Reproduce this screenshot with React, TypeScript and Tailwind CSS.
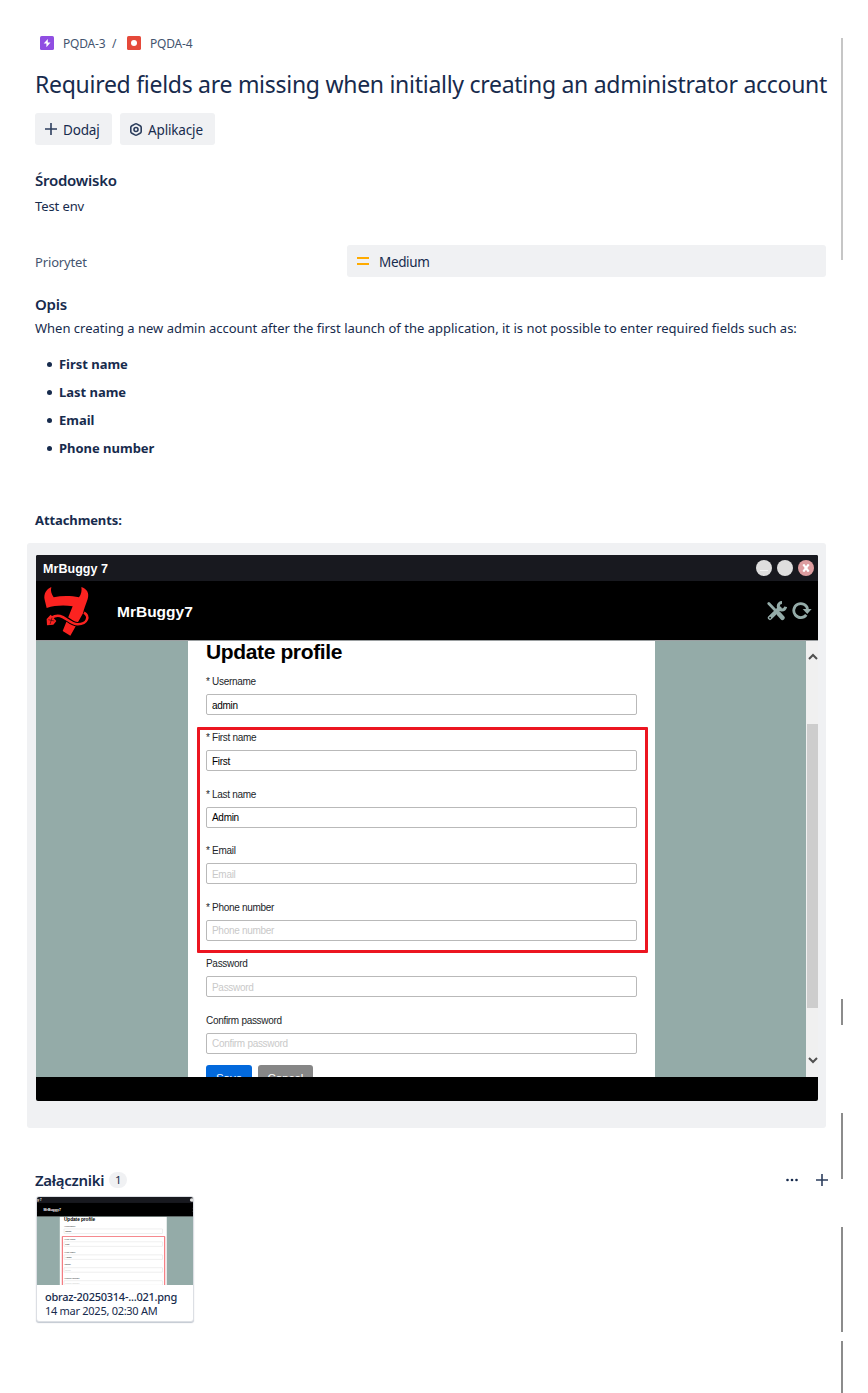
import React from "react";

const SEGMENTS = [
  { gap: "mt-[38px]", size: "h-[222px]", tone: "bg-[#c6c6c6]" },
  { gap: "mt-[739px]", size: "h-[26px]", tone: "bg-[#8c8c8c]" },
  { gap: "mt-[88px]", size: "h-[66px]", tone: "bg-[#8c8c8c]" },
  { gap: "mt-[48px]", size: "h-[105px]", tone: "bg-[#8c8c8c]" },
  { gap: "mt-[9px]", size: "h-[52px]", tone: "bg-[#8c8c8c]" },
];

function ScrollRail() {
  return (
    <div className="flex w-[2px] shrink-0 flex-col">
      {SEGMENTS.map((s, i) => (
        <div key={i} className={`${s.gap} ${s.size} ${s.tone} w-[2px] shrink-0`} />
      ))}
    </div>
  );
}

function EpicIcon() {
  return (
    <svg width="14" height="14" viewBox="0 0 14 14">
      <rect width="14" height="14" rx="1.6" fill="#904ee2" />
      <path d="M7.8 2.9 3.7 7.5h2.7v3.7l4.1-4.6H7.8z" fill="#fff" />
    </svg>
  );
}

function BugIcon() {
  return (
    <svg width="14" height="14" viewBox="0 0 14 14">
      <rect width="14" height="14" rx="1.6" fill="#e5493a" />
      <circle cx="7" cy="7" r="3" fill="#fff" />
    </svg>
  );
}

function PlusIcon() {
  return (
    <svg width="12" height="12" viewBox="0 0 12 12" fill="none" stroke="#2c3e5d" strokeWidth="1.6">
      <path d="M6 0v12M0 6h12" />
    </svg>
  );
}

function AppsIcon() {
  return (
    <svg width="12" height="13" viewBox="0 0 12 13" fill="none" stroke="#2c3e5d" strokeWidth="1.6">
      <path d="M4.9 1.1Q6 .5 7.1 1.1l3 1.7q1.1.6 1.1 1.8v3.8q0 1.2-1.1 1.8l-3 1.7q-1.1.6-2.2 0l-3-1.7Q.8 9.6.8 8.4V4.6q0-1.2 1.1-1.8z" />
      <circle cx="6" cy="6.5" r="2" />
    </svg>
  );
}

function DevilLogo() {
  return (
    <svg width="48" height="52" viewBox="70 120 144 156">
      <path
        d="M95 126C80 132 71 148 75 164L81 189C106 181 134 180 159 184L129 258 152 272 190 205C193 190 199 178 204 162 210 144 201 131 185 126 187 136 185 148 178 157 154 152 126 152 102 157 95 147 92 137 95 126z"
        fill="#fb2320"
      />
      <path d="M112 211C135 208 150 238 174 238 203 237 209 215 192 207" fill="none" stroke="#000" strokeWidth="14" />
      <path d="M96 218C128 197 144 237 174 238 205 237 210 213 193 203" fill="none" stroke="#fb2320" strokeWidth="7.5" />
      <path d="M93 209 110 228 101 239 82 241 81 222z" fill="#fb2320" />
      <path d="M86 224 104 228M91 238 97 218" stroke="#000" strokeWidth="1.5" />
    </svg>
  );
}

function ToolsIcon() {
  return (
    <svg width="20" height="20" viewBox="0 0 20 20" fill="none" stroke="#94aba8">
      <path d="M1.8 2.6 9 10" strokeWidth="2.8" strokeLinecap="round" />
      <path d="M12 13 15.4 16.8" strokeWidth="4.6" strokeLinecap="round" />
      <path d="M3 16.8 12.5 7.5" strokeWidth="4.4" strokeLinecap="round" />
      <path d="M15 1.6A3.7 3.7 0 1 0 18.6 5.8" strokeWidth="3" />
      <circle cx="3.1" cy="16.7" r=".9" fill="#000" stroke="none" />
    </svg>
  );
}

function ReloadIcon() {
  return (
    <svg width="20" height="18" viewBox="0 0 20 18">
      <path d="M14.3 13.9A7 7 0 1 1 15.6 8" fill="none" stroke="#94aba8" strokeWidth="2.8" />
      <path d="M10.7 8h8.9l-4.3 5z" fill="#94aba8" />
    </svg>
  );
}

function Chevron({ down = false }: { down?: boolean }) {
  return (
    <svg width="10" height="7" viewBox="0 0 10 7" fill="none" stroke="#505050" strokeWidth="2">
      <path d={down ? "M1 1l4 4 4-4" : "M1 6l4-4 4 4"} />
    </svg>
  );
}

const FIELDS = [
  { label: "* Username", value: "admin", filled: true },
  { label: "* First name", value: "First", filled: true },
  { label: "* Last name", value: "Admin", filled: true },
  { label: "* Email", value: "Email", filled: false },
  { label: "* Phone number", value: "Phone number", filled: false },
  { label: "Password", value: "Password", filled: false },
  { label: "Confirm password", value: "Confirm password", filled: false },
];

function BuggyWindow() {
  return (
    <div className="flex h-[546px] w-[782px] flex-col overflow-hidden rounded-[2px] bg-black font-['Liberation_Sans',Arial,sans-serif]">
      <div className="flex h-[26px] shrink-0 items-center bg-[#18191f] pl-[7px] pr-[4px]">
        <span className="mt-[2px] text-[12.5px] font-bold leading-none tracking-[0.05px] text-white">MrBuggy 7</span>
        <div className="ml-auto flex gap-[5px]">
          <span className="flex h-[16px] w-[16px] items-center justify-center rounded-full bg-[#dedede]">
            <span className="mt-[5px] h-px w-[8px] bg-[#f4f4f4]" />
          </span>
          <span className="h-[16px] w-[16px] rounded-full bg-[#dedede]" />
          <span className="flex h-[16px] w-[16px] items-center justify-center rounded-full bg-[#dd9da0]">
            <svg width="8" height="8" viewBox="0 0 8 8" stroke="#fff" strokeWidth="2.2">
              <path d="M1.3 .4l5.4 7.2M6.7 .4L1.3 7.6" />
            </svg>
          </span>
        </div>
      </div>
      <div className="flex h-[59px] shrink-0 items-center pl-[7px] pr-[6px]">
        <DevilLogo />
        <span className="ml-[26px] mt-[2px] text-[15.5px] font-bold leading-none text-white">MrBuggy7</span>
        <div className="ml-auto flex items-center gap-[5px]">
          <ToolsIcon />
          <div className="mb-[2px]">
            <ReloadIcon />
          </div>
        </div>
      </div>
      <div className="flex h-[437px] shrink-0 overflow-hidden border-t border-[#9a9ea0] bg-[#94aba8]">
        <div className="relative ml-[152px] h-[436px] w-[467px] overflow-hidden bg-white px-[18px]">
          <h2 className="h-[34px] whitespace-nowrap text-[21px] font-bold leading-[22px] tracking-[-0.37px] text-black">
            Update profile
          </h2>
          {FIELDS.map((f) => (
            <div key={f.label} className="h-[56.45px]">
              <div className="h-[19px] text-[10px] leading-[13px] tracking-[-0.3px] text-[#212529]">{f.label}</div>
              <div
                className={`flex h-[21px] w-[431px] items-center rounded-[2px] border border-[#b9b9b9] pl-[5px] pt-[2px] text-[10px] leading-none tracking-[-0.3px] ${
                  f.filled ? "text-black" : "text-[#c9c9c9]"
                }`}
              >
                {f.value}
              </div>
            </div>
          ))}
          <div className="mt-[-5px] flex gap-[6px] text-[11.5px] leading-[26px] text-white">
            <span className="h-[24px] w-[46px] rounded-[3px] bg-[#0369dc] text-center">Save</span>
            <span className="h-[24px] w-[55px] rounded-[3px] bg-[#868686] text-center">Cancel</span>
          </div>
          <div className="absolute left-[9px] top-[86px] h-[226px] w-[451px] rounded-[1px] border-[3px] border-[#ec1520]" />
        </div>
        <div className="ml-auto flex w-[12px] flex-col items-center bg-[#f0f0f0]">
          <div className="flex h-[83px] items-start pl-px pt-[12px]">
            <Chevron />
          </div>
          <div className="h-[284px] w-[11px] bg-[#cdcdcd]" />
          <div className="mt-[49px] pl-px">
            <Chevron down />
          </div>
        </div>
      </div>
    </div>
  );
}

export default function App() {
  return (
    <div className="flex h-[1393px] w-[868px] overflow-hidden rounded-t-[6px] bg-white font-['Noto_Sans','Open_Sans',sans-serif] text-[13px] text-[#172b4d]">
      <main className="flex w-[841px] shrink-0 flex-col pl-[35px]">
        <nav className="mt-[33px] flex h-[20px] items-center whitespace-nowrap pl-[5px] text-[12px] leading-5 text-[#44546f]">
          <EpicIcon />
          <span className="ml-[9px] mt-px w-[43px] tracking-[-0.2px]">PQDA-3</span>
          <span className="ml-[6px] mt-px w-[15px]">/</span>
          <BugIcon />
          <span className="ml-[9px] mt-px tracking-[-0.2px]">PQDA-4</span>
        </nav>
        <h1 className="mt-[16px] h-[31px] whitespace-nowrap text-[23px] leading-[30px] tracking-[-0.28px]">
          Required fields are missing when initially creating an administrator account
        </h1>
        <div className="mt-[13px] flex gap-[8px] text-[14px] leading-[32px]">
          <button className="flex h-[32px] w-[77px] items-center whitespace-nowrap rounded-[3px] bg-[#f0f1f3] pl-[10px]">
            <PlusIcon />
            <span className="ml-[6px] mt-[2px] text-[13.5px] tracking-[-0.15px]">Dodaj</span>
          </button>
          <button className="flex h-[32px] w-[95px] items-center whitespace-nowrap rounded-[3px] bg-[#f0f1f3] pl-[10px]">
            <AppsIcon />
            <span className="ml-[6px] mt-[2px] text-[13.5px] tracking-[-0.15px]">Aplikacje</span>
          </button>
        </div>
        <h2 className="mt-[25px] h-[21px] text-[15px] font-semibold leading-5 tracking-[-0.25px]">Środowisko</h2>
        <p className="mt-[5px] h-[20px] leading-5 tracking-[-0.1px]">Test env</p>
        <div className="mt-[29px] flex h-[32px] items-center">
          <div className="mt-[3px] w-[312px] tracking-[-0.15px] text-[#44546f]">Priorytet</div>
          <div className="flex h-[32px] w-[479px] items-center rounded-[3px] bg-[#f0f1f3] pl-[10px]">
            <div className="flex w-[12px] flex-col gap-[4px]">
              <span className="h-[2px] bg-[#ffab00]" />
              <span className="h-[2px] bg-[#ffab00]" />
            </div>
            <span className="ml-[10px] mt-[2px] text-[13.5px] tracking-[-0.35px]">Medium</span>
          </div>
        </div>
        <h2 className="mt-[17px] h-[21px] text-[15px] font-semibold leading-5 tracking-[-0.25px]">Opis</h2>
        <p className="mt-[3px] h-[20px] whitespace-nowrap leading-5">
          When creating a new admin account after the first launch of the application, it is not possible to enter
          required fields such as:
        </p>
        <ul className="mt-[16px] flex flex-col gap-[8px] font-bold leading-5 tracking-[-0.02px]">
          {["First name", "Last name", "Email", "Phone number"].map((t) => (
            <li key={t} className="flex h-[20px] items-center pl-[12px]">
              <span className="mr-[7px] mt-px h-[5px] w-[5px] rounded-full bg-[#172b4d]" />
              {t}
            </li>
          ))}
        </ul>
        <p className="mt-[52px] h-[20px] font-bold leading-5 tracking-[-0.1px]">Attachments:</p>
        <figure className="ml-[-8px] mt-[13px] h-[585px] w-[799px] shrink-0 rounded-[3px] bg-[#f0f1f3] pl-[9px] pt-[12px]">
          <BuggyWindow />
        </figure>
        <div className="mt-[42px] flex h-[20px] items-center">
          <h2 className="text-[15px] font-semibold leading-5 tracking-[-0.3px]">Załączniki</h2>
          <span className="ml-[5px] flex h-[16px] w-[18px] items-center justify-center rounded-full bg-[#f0f1f3] text-[11.5px] leading-4">
            1
          </span>
          <svg className="ml-auto" width="12" height="4" viewBox="0 0 12 4" fill="#172b4d">
            <circle cx="1.5" cy="2" r="1.3" />
            <circle cx="6" cy="2" r="1.3" />
            <circle cx="10.5" cy="2" r="1.3" />
          </svg>
          <div className="ml-[18px] mr-[13px]">
            <PlusIcon />
          </div>
        </div>
        <article className="ml-px mt-[6px] h-[126px] w-[158px] shrink-0 overflow-hidden rounded-[3px] border border-[#dcdfe4] bg-white shadow-[0_1px_1px_rgba(9,30,66,0.25)]">
          <div className="h-[88px] w-[156px] overflow-hidden">
            <div className="ml-[-12px] h-[546px] w-[782px] origin-top-left scale-[0.229]">
              <BuggyWindow />
            </div>
          </div>
          <div className="whitespace-nowrap pl-[8px] pt-[5px] text-[11px] leading-[14px]">
            <div className="font-medium tracking-[-0.25px]">obraz-20250314-...021.png</div>
            <div className="tracking-[-0.28px]">14 mar 2025, 02:30 AM</div>
          </div>
        </article>
      </main>
      <ScrollRail />
    </div>
  );
}
